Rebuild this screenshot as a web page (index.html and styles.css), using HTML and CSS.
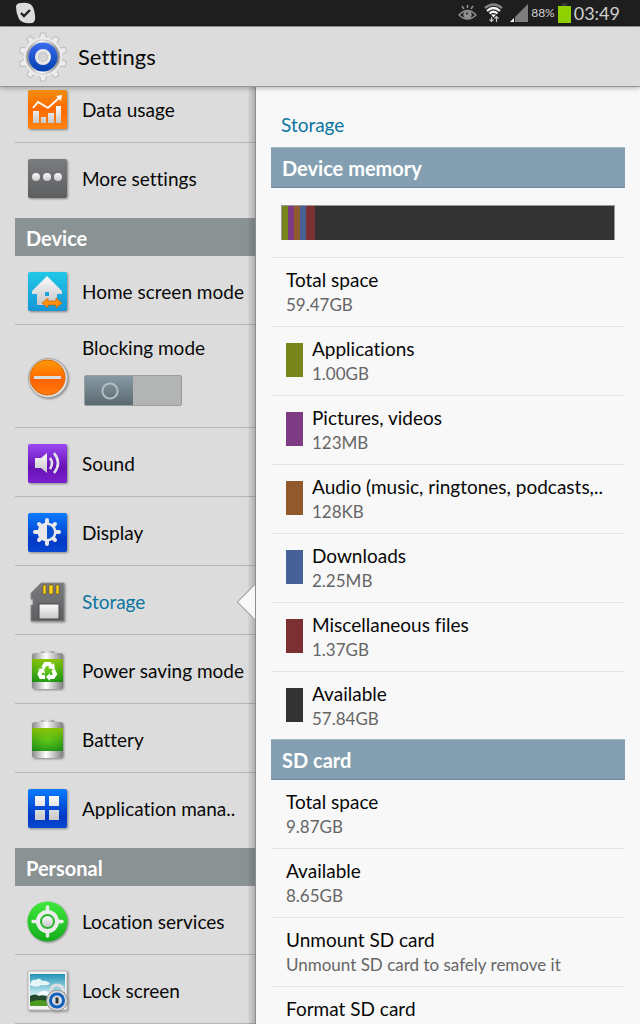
FILE: index.html
```
<!DOCTYPE html>
<html lang="en">
<head>
  <meta charset="UTF-8" />
  <meta name="viewport" content="width=device-width, initial-scale=1.0"/>
  <title>Settings</title>
  <link rel="stylesheet" href="styles.css">
</head>
<body>

  <!-- Shared gradients -->
  <svg class="defs" width="0" height="0" aria-hidden="true">
    <defs>
      <linearGradient id="orange" x2="0" y2="1"><stop stop-color="#f08c10"/><stop offset=".5" stop-color="#ff6a00"/><stop offset="1" stop-color="#ff8412"/></linearGradient>
      <linearGradient id="gray" x2="0" y2="1"><stop stop-color="#7b7c7f"/><stop offset="1" stop-color="#5d5e60"/></linearGradient>
      <linearGradient id="cyan" x2="0" y2="1"><stop stop-color="#22c8e8"/><stop offset="1" stop-color="#1596d8"/></linearGradient>
      <linearGradient id="purple" x2="0" y2="1"><stop stop-color="#9a48f4"/><stop offset=".6" stop-color="#6812b4"/><stop offset="1" stop-color="#7a1fd0"/></linearGradient>
      <linearGradient id="blue" x2="0" y2="1"><stop stop-color="#0a7cff"/><stop offset=".7" stop-color="#0238c4"/><stop offset="1" stop-color="#0848d0"/></linearGradient>
      <linearGradient id="white" x2="0" y2="1"><stop stop-color="#fafafa"/><stop offset="1" stop-color="#c8c8ca"/></linearGradient>
      <linearGradient id="disc" x2="0" y2="1"><stop stop-color="#ff9a08"/><stop offset=".6" stop-color="#ff6400"/><stop offset="1" stop-color="#ff7a10"/></linearGradient>
      <linearGradient id="metal"><stop stop-color="#8a8a8a"/><stop offset=".45" stop-color="#fff"/><stop offset="1" stop-color="#808080"/></linearGradient>
      <radialGradient id="cell" cx=".5" cy=".5" r=".7"><stop stop-color="#5fd41c"/><stop offset="1" stop-color="#177d10"/></radialGradient>
      <linearGradient id="charge" x2="0" y2="1"><stop stop-color="#b8d800" stop-opacity=".7"/><stop offset="1" stop-color="#1aa020" stop-opacity=".3"/></linearGradient>
      <linearGradient id="green" x2="0" y2="1"><stop stop-color="#40e83c"/><stop offset="1" stop-color="#16ae1c"/></linearGradient>
      <linearGradient id="sky" x2="0" y2="1"><stop stop-color="#1f93b4"/><stop offset=".6" stop-color="#c4e8f0"/><stop offset="1" stop-color="#e4f4f4"/></linearGradient>
      <linearGradient id="hub" x2="0" y2="1"><stop stop-color="#3b6cf0"/><stop offset="1" stop-color="#003fae"/></linearGradient>
    </defs>
  </svg>

  <div class="status-bar">
    <svg class="notice" width="22" height="22" viewBox="0 0 22 22" aria-hidden="true">
      <path d="M1 5Q1 1 6 1Q17-1 19 8Q22 20 17 21Q7 22 4 17Q1 11 1 5Z" fill="#dcdcdc"/>
      <path d="M6 11l3 3 6-6" fill="none" stroke="#222" stroke-width="2.4"/>
    </svg>
    <div class="status-icons">
      <svg width="19" height="16" viewBox="0 0 19 16" fill="none" stroke="#909090" stroke-width="1.5" aria-hidden="true">
        <path d="M1 10Q9.500 1 18 10Q9.500 18 1 10Z"/>
        <circle cx="9.500" cy="9.500" r="3.500" fill="#909090"/>
        <circle cx="9" cy="8.500" r="1" fill="#1e1e1e" stroke="none"/>
        <path d="M9.500 0v3M4 1l2 3M15 1l-2 3"/>
      </svg>
      <svg class="wifi" width="19" height="20" viewBox="0 0 19 20" fill="none" aria-hidden="true">
        <path d="M1 5Q9.500-2 18 5" stroke="#858585" stroke-width="2.600"/>
        <path d="M3 8Q9.500 2 16 8M5.500 10.500Q9.500 7 13.500 10.500" stroke="#f5f5f5" stroke-width="2.200"/>
        <path d="M7 11.500h5l-2.500 3z" fill="#fff"/>
        <path d="M7.500 14v4M5.500 16.500l2 2 2-2M12.500 19v-5M10.500 15.500l2-2 2 2" stroke="#c4c4c4" stroke-width="1.200"/>
      </svg>
      <svg width="18" height="18" viewBox="0 0 18 18" aria-hidden="true">
        <path d="M18 0v18H5V13z" fill="#7d7d7d"/>
        <path d="M0 18l4-4v4z" fill="#fff"/>
      </svg>
      <span class="percent">88%</span>
      <svg width="13" height="20" viewBox="0 0 13 20" aria-hidden="true">
        <path d="M4 0h5v3H4z" fill="#383838"/>
        <path d="M0 3h13v17H0z" fill="#90d000"/>
      </svg>
      <span class="clock">03:49</span>
    </div>
  </div>

  <header class="title-bar">
    <svg width="50" height="50" viewBox="0 0 50 50" aria-hidden="true">
      <g fill="#ececec" stroke="#bcbcbc" stroke-linejoin="round">
        <path id="teeth" d="M19 8l3-3 .5-4h5l.5 4 3 3zM19 42l3 3 .5 4h5l.5-4 3-3z"/>
        <use href="#teeth" transform="rotate(36 25 25)"/>
        <use href="#teeth" transform="rotate(72 25 25)"/>
        <use href="#teeth" transform="rotate(108 25 25)"/>
        <use href="#teeth" transform="rotate(144 25 25)"/>
      </g>
      <circle cx="25" cy="25" r="19.500" fill="#ececec"/>
      <circle cx="25" cy="25" r="17" fill="url(#metal)" stroke="#c9c9c9"/>
      <circle cx="25" cy="25" r="14.500" fill="url(#hub)"/>
      <circle cx="25" cy="25" r="6.500" fill="#b4b4b4" stroke="#e8e8e8" stroke-width="3"/>
      <circle cx="25" cy="25" r="4.500" fill="#d4d4d4"/>
    </svg>
    <h1>Settings</h1>
  </header>

  <div class="panes">
    <nav class="sidebar">
      <div class="menu">
        <a href="#" class="item">
          <svg class="icon" viewBox="0 0 40 40"><rect width="39" height="39" rx="2" fill="url(#orange)"/>
            <g fill="url(#white)"><path d="M5 21h6v12H5zM13 27h5v6h-5zM20 23h6v10h-6zM28 16h5v17h-5z"/></g>
            <path d="M5 18l5-6 10 6L31 8" fill="none" stroke="#fff" stroke-width="1.800"/><path d="M34 5l-1 6-5-5z" fill="#fff"/></svg>
          <span>Data usage</span>
        </a>
        <a href="#" class="item">
          <svg class="icon" viewBox="0 0 40 40"><rect width="39" height="39" rx="2" fill="url(#gray)"/>
            <g fill="url(#white)"><circle cx="8" cy="18" r="4"/><circle cx="19" cy="18" r="4"/><circle cx="30" cy="18" r="4"/></g></svg>
          <span>More settings</span>
        </a>

        <h2 class="group">Device</h2>
        <a href="#" class="item">
          <svg class="icon" viewBox="0 0 40 40"><rect width="39" height="39" rx="2" fill="url(#cyan)"/>
            <path d="M19 4L4 19v3h5v11h20V22h5v-3z" fill="url(#white)"/><path d="M17 20h4v4h-4z" fill="#1aa5d8"/>
            <path d="M14 31l6-5v3h8v-3l6 5-6 5v-3h-8v3z" fill="#ff9110" stroke="#c56308" stroke-width=".7"/></svg>
          <span>Home screen mode</span>
        </a>
        <div class="item item-switch">
          <svg class="icon" viewBox="0 0 40 40"><circle cx="20" cy="20" r="19.500" fill="#e2e2e4" stroke="#a9a9a9"/>
            <circle cx="19.500" cy="19.500" r="17.500" fill="url(#disc)" stroke="#d86800"/><path d="M6 18h27v3H6z" fill="#dcdcdc"/></svg>
          <div class="switch-box">
            <label for="blocking">Blocking mode</label>
            <input type="checkbox" id="blocking" class="switch">
          </div>
        </div>
        <a href="#" class="item">
          <svg class="icon" viewBox="0 0 40 40"><rect width="39" height="39" rx="2" fill="url(#purple)"/>
            <path d="M7 14h6l6-5v20l-6-5H7z" fill="url(#white)"/>
            <path d="M22 14q4 5 0 11M26 9q8 10 0 20" fill="none" stroke="#e4e4e8" stroke-width="2.600"/></svg>
          <span>Sound</span>
        </a>
        <a href="#" class="item">
          <svg class="icon" viewBox="0 0 40 40"><rect width="39" height="39" rx="2" fill="url(#blue)"/>
            <g stroke="#e8e8ea" stroke-width="4" stroke-linecap="round"><path d="M19 7v24M7 19h24M11 11l16 16M27 11L11 27"/></g>
            <circle cx="19" cy="19" r="9.500" fill="#e8e8ea"/><path d="M19 12a7 7 0 0 1 0 14z" fill="#0750d0"/></svg>
          <span>Display</span>
        </a>
        <a href="#" class="item selected">
          <svg class="icon" viewBox="0 0 40 40"><path d="M13 1h23v38H3V23h2v-6H3v-6z" fill="url(#gray)" stroke="#8b8b8d" stroke-width=".8"/>
            <g fill="#ffd21a" stroke="#62500a" stroke-width=".6"><path d="M15 3h3v9h-3zM21 3h4v9h-4zM28 3h3v9h-3z"/></g>
            <path d="M11 22h20v15H11z" fill="url(#white)" stroke="#4b4b4b"/></svg>
          <span>Storage</span>
        </a>
        <a href="#" class="item">
          <svg class="icon" viewBox="0 0 40 40"><path d="M13 0h13v4H13z" fill="url(#metal)" opacity=".6"/><rect x="4" y="2" width="31" height="36" rx="3" fill="url(#metal)"/>
            <path d="M4 8h31v23H4z" fill="url(#cell)"/><path d="M4 8h31v23H4z" fill="url(#charge)"/>
            <g fill="none" stroke="#fff" stroke-width="4"><path d="M15 17l2.500-4h4l2 3"/><path d="M25 19l2 4-2 3h-3"/><path d="M17 26h-4l-1.500-3 1.500-3"/></g>
            <path d="M26 12l1 7-7-2zM22 22v8l-4-4zM10 18l6-1 1 6z" fill="#fff"/></svg>
          <span>Power saving mode</span>
        </a>
        <a href="#" class="item">
          <svg class="icon" viewBox="0 0 40 40"><path d="M13 0h13v4H13z" fill="url(#metal)" opacity=".6"/><rect x="4" y="2" width="31" height="36" rx="3" fill="url(#metal)"/>
            <path d="M4 8h31v23H4z" fill="url(#cell)"/><path d="M4 8h31v23H4z" fill="url(#charge)"/></svg>
          <span>Battery</span>
        </a>
        <a href="#" class="item">
          <svg class="icon" viewBox="0 0 40 40"><rect width="39" height="39" rx="2" fill="url(#blue)"/>
            <path d="M7 7h10v10H7zM21 7h10v10H21zM7 21h10v10H7zM21 21h10v10H21z" fill="url(#white)"/></svg>
          <span>Application mana..</span>
        </a>

        <h2 class="group">Personal</h2>
        <a href="#" class="item">
          <svg class="icon" viewBox="0 0 40 40"><circle cx="19.500" cy="19.500" r="20" fill="url(#green)"/>
            <path d="M19.500 5v29M5 19.500h29" stroke="#ececec" stroke-width="3.500" stroke-linecap="round"/>
            <circle cx="19.500" cy="19.500" r="9.500" fill="#26b82a" stroke="#ececec" stroke-width="4"/><circle cx="19.500" cy="19.500" r="5.500" fill="url(#white)"/></svg>
          <span>Location services</span>
        </a>
        <a href="#" class="item">
          <svg class="icon" viewBox="0 0 40 40"><rect width="39" height="39" rx="1" fill="#f2f2f2" stroke="#b8b8b8"/>
            <path d="M2 3h35v32H2z" fill="url(#sky)"/>
            <path d="M2 14q1-6 6-5 4-3 6 1 5-1 8 3-4 2-9 1-5 3-11 0zM11 22q4-4 9-1l4 3H9z" fill="#fff" opacity=".85"/>
            <path d="M2 25q5-3 9 0 6-2 10 2l16-6v14H2z" fill="#234b2c"/><path d="M2 31q10-4 20 0v4H2z" fill="#4c9a20"/>
            <path d="M23 22v-3a6 5 0 0 1 12 0v3" fill="none" stroke="#dedede" stroke-width="3"/>
            <circle cx="29" cy="29.500" r="10.500" fill="#d5d5d5" stroke="#929292"/><circle cx="29" cy="29.500" r="6.500" fill="#d8dde2" stroke="#1461bc" stroke-width="3"/>
            <path d="M27.500 26.500h3v6h-3z" fill="#333"/></svg>
          <span>Lock screen</span>
        </a>
      </div>
    </nav>

    <main class="content">
      <h2 class="page-title">Storage</h2>

      <h3 class="section">Device memory</h3>
      <div class="usage">
        <div class="usage-bar">
          <span class="seg apps"></span><span class="seg pictures"></span><span class="seg audio"></span><span class="seg downloads"></span><span class="seg misc"></span>
        </div>
      </div>
      <div class="row"><p>Total space</p><small>59.47GB</small></div>
      <div class="row keyed"><i class="swatch apps"></i><p>Applications</p><small>1.00GB</small></div>
      <div class="row keyed"><i class="swatch pictures"></i><p>Pictures, videos</p><small>123MB</small></div>
      <div class="row keyed"><i class="swatch audio"></i><p>Audio (music, ringtones, podcasts,..</p><small>128KB</small></div>
      <div class="row keyed"><i class="swatch downloads"></i><p>Downloads</p><small>2.25MB</small></div>
      <div class="row keyed"><i class="swatch misc"></i><p>Miscellaneous files</p><small>1.37GB</small></div>
      <div class="row keyed last"><i class="swatch free"></i><p>Available</p><small>57.84GB</small></div>

      <h3 class="section">SD card</h3>
      <div class="row"><p>Total space</p><small>9.87GB</small></div>
      <div class="row"><p>Available</p><small>8.65GB</small></div>
      <button type="button" class="row"><span>Unmount SD card</span><small>Unmount SD card to safely remove it</small></button>
      <button type="button" class="row"><span>Format SD card</span></button>
    </main>
  </div>

</body>
</html>
```
FILE: styles.css
```
:root {
  --dark: #1e1e1e;
  --panel: #dcdcdc;
  --page: #f8f8f8;
  --accent: #0b75a0;
  --line: #e4e4e4;
}

* {
  box-sizing: border-box;
}

body {
  margin: 0;
  height: 100vh;
  display: flex;
  flex-direction: column;
  overflow: hidden;
  font-family: Lato, "Open Sans", sans-serif;
  font-size: 19px;
  font-variant-ligatures: none;
  line-height: 24px;
  color: #080808;
  background: var(--page);
}

h1, h2, h3, p {
  margin: 0;
  font-size: 19px;
  font-weight: normal;
}

.defs {
  position: absolute;
}

.status-bar {
  flex: none;
  height: 26px;
  padding: 0 20px 0 15px;
  display: flex;
  align-items: center;
  justify-content: space-between;
  background: var(--dark);
  color: #d0d0d0;
}

.status-icons {
  display: flex;
  align-items: center;
  gap: 3px;
}

.wifi {
  margin: 0 4px;
}

.percent {
  font-size: 12px;
}

.clock {
  font-size: 18px;
}

.title-bar {
  position: relative;
  flex: none;
  height: 61px;
  padding: 0 18px;
  display: flex;
  align-items: center;
  gap: 10px;
  background: var(--panel);
  border-top: 1px solid #8c8c8c;
  border-bottom: 1px solid #979797;
  box-shadow: 0 1px 5px rgba(0, 0, 0, 0.3);
}

.title-bar h1 {
  font-size: 22px;
}

.panes {
  flex: 1;
  min-height: 0;
  display: grid;
  grid-template-columns: 2fr 3fr;
}

/* Left menu */
.sidebar {
  min-height: 0;
  overflow: hidden;
  padding-left: 15px;
  background: linear-gradient(to left, #b0b0b0, var(--panel) 8px);
  border-right: 1px solid #8e8e8e;
}

/* list is scrolled slightly under the title bar */
.menu {
  margin-top: -13px;
}

.item {
  position: relative;
  height: 69px;
  padding: 3px 0 0 13px;
  display: flex;
  align-items: center;
  gap: 14px;
  color: inherit;
  text-decoration: none;
  white-space: nowrap;
  border-bottom: 1px solid rgba(0, 0, 0, 0.17);
}

.icon {
  flex: none;
  width: 40px;
  height: 40px;
  overflow: visible;
  filter: drop-shadow(1px 1px 1px rgba(0, 0, 0, 0.4));
}

.item:has(+ .group) {
  height: 75px;
  padding-bottom: 7px;
  border-bottom: none;
}

.group {
  height: 38px;
  padding-left: 11px;
  font-size: 20px;
  font-weight: bold;
  line-height: 40px;
  color: #fff;
  background: linear-gradient(to left, #737b7d, #8a9294 8px);
}

.item-switch {
  height: 103px;
}

.switch-box {
  display: flex;
  flex-direction: column;
  align-items: flex-start;
  gap: 15px;
  padding-bottom: 14px;
}

.switch {
  appearance: none;
  width: 98px;
  height: 31px;
  margin: 0 2px;
  border: 1px solid #999d9d;
  border-radius: 2px;
  background:
    radial-gradient(circle at 25px 15px, transparent 6px, #b4bec6 7px, #b4bec6 8px, transparent 9px) 0 0 / 48px 100% no-repeat,
    linear-gradient(#879aa4, #5b6971) 0 0 / 48px 100% no-repeat,
    #b3b5b4;
}

.switch:checked {
  background-position: 100% 0;
}

.selected {
  color: var(--accent);
}

/* notch pointing at the selected entry */
.selected::after {
  content: "";
  position: absolute;
  right: -13px;
  top: 23px;
  width: 24px;
  height: 24px;
  background: var(--page);
  border: 1px solid #9a9a9a;
  transform: rotate(45deg);
}

/* Right pane */
.content {
  min-width: 0;
  overflow: hidden;
  padding: 26px 15px 0;
}

.page-title {
  height: 34px;
  padding-left: 10px;
  color: var(--accent);
}

.section {
  height: 41px;
  padding-left: 11px;
  font-size: 20px;
  font-weight: bold;
  line-height: 41px;
  color: #fff;
  background: #839fb1;
  border-top: 1px solid #a5b5bf;
  border-bottom: 1px solid #708b9e;
}

.usage {
  height: 70px;
  padding: 17px 10px 18px;
  border-bottom: 1px solid var(--line);
}

.usage-bar {
  display: flex;
  height: 35px;
  background: #333;
  border: 1px solid #999;
  border-bottom: none;
}

.seg {
  flex: 0 0 6px;
}

.seg.misc {
  flex-basis: 9px;
}

.row {
  display: grid;
  align-content: start;
  width: 100%;
  height: 69px;
  padding: 10px 15px 0;
  font: inherit;
  color: inherit;
  text-align: left;
  white-space: nowrap;
  background: none;
  border: none;
  border-bottom: 1px solid var(--line);
}

.row small {
  font-size: 17px;
  line-height: 26px;
  color: #666;
}

.keyed {
  grid-template-columns: 17px 1fr;
  column-gap: 9px;
}

.last {
  height: 67px;
  border-bottom: none;
}

.swatch {
  grid-row: span 2;
  height: 34px;
  margin-top: 6px;
}

.apps {
  background: #77851b;
}

.pictures {
  background: #7c3b82;
}

.audio {
  background: #905a2d;
}

.downloads {
  background: #466196;
}

.misc {
  background: #7d3031;
}

.free {
  background: #333;
}
```
